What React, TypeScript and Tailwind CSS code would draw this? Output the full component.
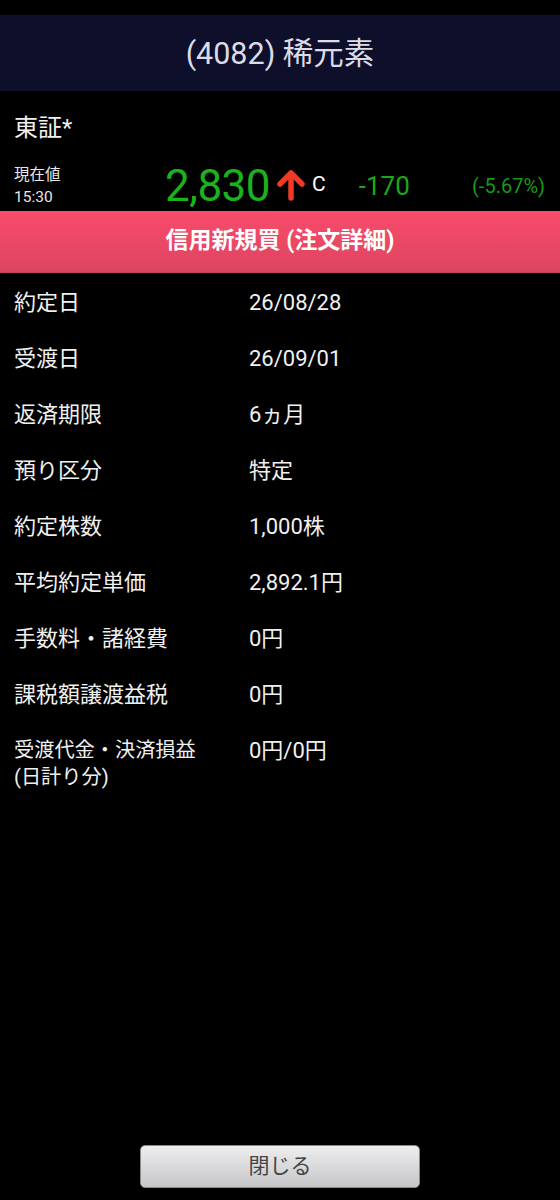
import React from 'react';

const rows: { label: string[]; value: string; small?: boolean }[] = [
  { label: ['約定日'], value: '26/08/28' },
  { label: ['受渡日'], value: '26/09/01' },
  { label: ['返済期限'], value: '6ヵ月' },
  { label: ['預り区分'], value: '特定' },
  { label: ['約定株数'], value: '1,000株' },
  { label: ['平均約定単価'], value: '2,892.1円' },
  { label: ['手数料・諸経費'], value: '0円' },
  { label: ['課税額譲渡益税'], value: '0円' },
  { label: ['受渡代金・決済損益', '(日計り分)'], value: '0円/0円', small: true },
];

const font = { fontFamily: 'Roboto, "Noto Sans CJK JP", sans-serif' };

export default function App() {
  return (
    <div className="flex h-[1200px] w-[560px] flex-col bg-black text-white" style={font}>
      <div className="h-[15px] bg-black" />
      <header className="flex h-[76px] items-center justify-center bg-[#0e0f2b]">
        <h1 className="mt-[2px] text-[30.5px] leading-none text-[#dcdce6]">(4082) 稀元素</h1>
      </header>

      <div className="flex h-[70px] items-center px-[14px] pt-[3px]">
        <span className="text-[24px] leading-none text-[#f0f0f0]">東証*</span>
      </div>

      <div className="flex h-[50px] items-center px-[14px]">
        <div className="flex w-[151px] flex-col gap-[3px] text-[15.5px] leading-[19px] text-[#e8e8e8]">
          <span>現在値</span>
          <span>15:30</span>
        </div>
        <span className="text-[44px] leading-none tracking-[-0.5px] text-[#1cb21c]">2,830</span>
        <svg viewBox="0 0 30 32" className="ml-[6px] mt-[-2px] h-[32px] w-[30px]">
          <path d="M15 4 L15 29 M4 15 L15 4 L26 15" fill="none" stroke="#f03a26" strokeWidth={5.5} strokeLinecap="round" strokeLinejoin="round" />
        </svg>
        <span className="ml-[6px] mt-[-4px] text-[21px] leading-none text-white">C</span>
        <span className="ml-[33px] text-[26px] leading-none text-[#1aa81a]">-170</span>
        <span className="ml-auto pr-[1px] text-[20px] leading-none text-[#169a16]">(-5.67%)</span>
      </div>

      <div className="flex h-[62px] items-center justify-center border-b border-[#c73e56] bg-gradient-to-b from-[#fa4b6b] to-[#dc4560]">
        <span className="text-[23px] font-bold text-white">信用新規買 (注文詳細)</span>
      </div>

      <div className="flex flex-col pt-[13px]">
        {rows.map((r) => (
          <div key={r.label[0]} className="flex min-h-[56px] px-[14px] pt-[3px] text-[22px] leading-[27px] text-[#f0f0f0]">
            <div className={r.small ? 'flex w-[235px] flex-col text-[20.2px] leading-[27px]' : 'flex w-[235px] flex-col'}>
              {r.label.map((l) => (
                <span key={l}>{l}</span>
              ))}
            </div>
            <span>{r.value}</span>
          </div>
        ))}
      </div>

      <div className="mt-auto flex justify-center pb-[12px]">
        <button className="flex h-[43px] w-[280px] items-center justify-center rounded-[5px] border border-[#8a8a8e] bg-gradient-to-b from-[#eeeef0] to-[#c6c6ca] text-[21px] text-[#444]">
          閉じる
        </button>
      </div>
    </div>
  );
}
